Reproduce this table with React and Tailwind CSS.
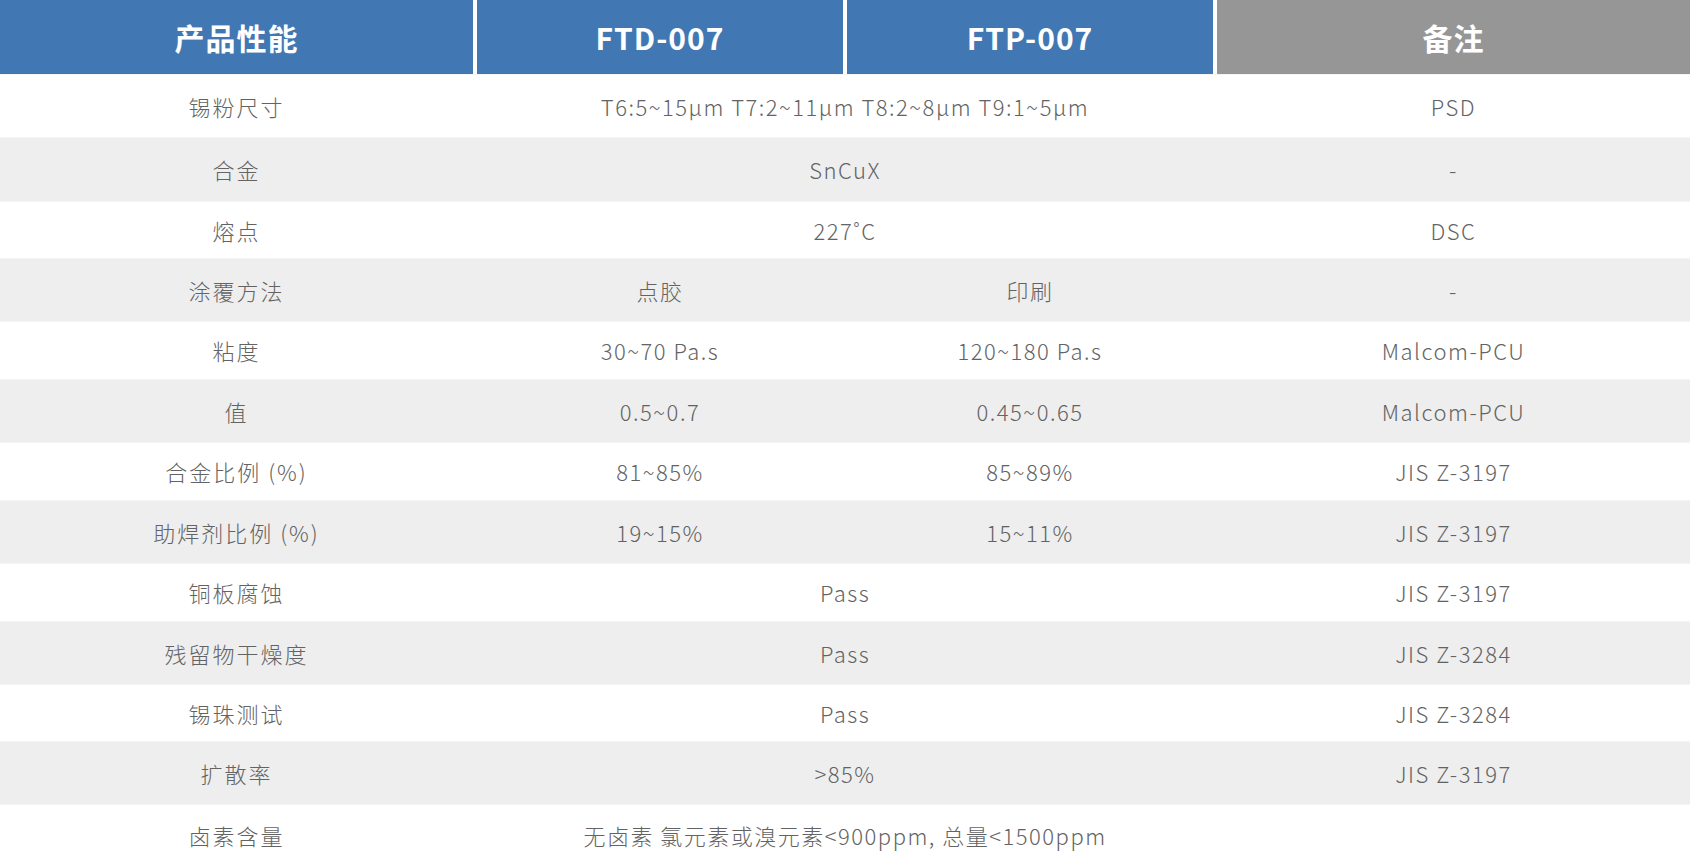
import React from "react";

// Table rows: [label, ftd, ftp, remark]; ftp === null means the value spans both product columns
const rows = [
  { label: "锡粉尺寸", ftd: "T6:5~15µm T7:2~11µm T8:2~8µm T9:1~5µm", ftp: null, note: "PSD", h: "h-[63px]" },
  { label: "合金", ftd: "SnCuX", ftp: null, note: "-", h: "h-[64px]" },
  { label: "熔点", ftd: "227˚C", ftp: null, note: "DSC", h: "h-[57px]" },
  { label: "涂覆方法", ftd: "点胶", ftp: "印刷", note: "-", h: "h-[63px]" },
  { label: "粘度", ftd: "30~70 Pa.s", ftp: "120~180 Pa.s", note: "Malcom-PCU", h: "h-[58px]" },
  { label: "值", ftd: "0.5~0.7", ftp: "0.45~0.65", note: "Malcom-PCU", h: "h-[63px]" },
  { label: "合金比例 (%)", ftd: "81~85%", ftp: "85~89%", note: "JIS Z-3197", h: "h-[58px]" },
  { label: "助焊剂比例 (%)", ftd: "19~15%", ftp: "15~11%", note: "JIS Z-3197", h: "h-[63px]" },
  { label: "铜板腐蚀", ftd: "Pass", ftp: null, note: "JIS Z-3197", h: "h-[58px]" },
  { label: "残留物干燥度", ftd: "Pass", ftp: null, note: "JIS Z-3284", h: "h-[63px]" },
  { label: "锡珠测试", ftd: "Pass", ftp: null, note: "JIS Z-3284", h: "h-[57px]" },
  { label: "扩散率", ftd: ">85%", ftp: null, note: "JIS Z-3197", h: "h-[63px]" },
  { label: "卤素含量", ftd: "无卤素 氯元素或溴元素<900ppm, 总量<1500ppm", ftp: null, note: "", h: "h-[62px]" },
];

const font = { fontFamily: '"Noto Sans CJK SC", "Noto Sans", sans-serif' };

const App = () => {
  return (
    <div className="w-[1690px] bg-white" style={font}>
      {/* Header */}
      <div className="grid grid-cols-[473px_366px_366px_473px] gap-x-[4px] h-[74px] text-white font-bold text-[30px] tracking-[1px]">
        <div className="flex items-center justify-center bg-[#4178b4]">产品性能</div>
        <div className="flex items-center justify-center bg-[#4178b4]">FTD-007</div>
        <div className="flex items-center justify-center bg-[#4178b4]">FTP-007</div>
        <div className="flex items-center justify-center bg-[#969696]">备注</div>
      </div>

      {/* Body */}
      {rows.map((row, i) => (
        <div
          key={row.label}
          className={`grid grid-cols-[473px_366px_366px_473px] gap-x-[4px] text-[22px] font-light tracking-[1.5px] text-[#636363] border-t border-[#f5f5f5] ${row.h} ${i % 2 === 1 ? "bg-[#eeeeee]" : "bg-white"}`}
        >
          <div className="flex items-center justify-center tracking-[2px]">{row.label}</div>
          {row.ftp === null ? (
            <div className="col-span-2 flex items-center justify-center">{row.ftd}</div>
          ) : (
            <>
              <div className="flex items-center justify-center">{row.ftd}</div>
              <div className="flex items-center justify-center">{row.ftp}</div>
            </>
          )}
          <div className="flex items-center justify-center">{row.note}</div>
        </div>
      ))}
    </div>
  );
};

export default App;
